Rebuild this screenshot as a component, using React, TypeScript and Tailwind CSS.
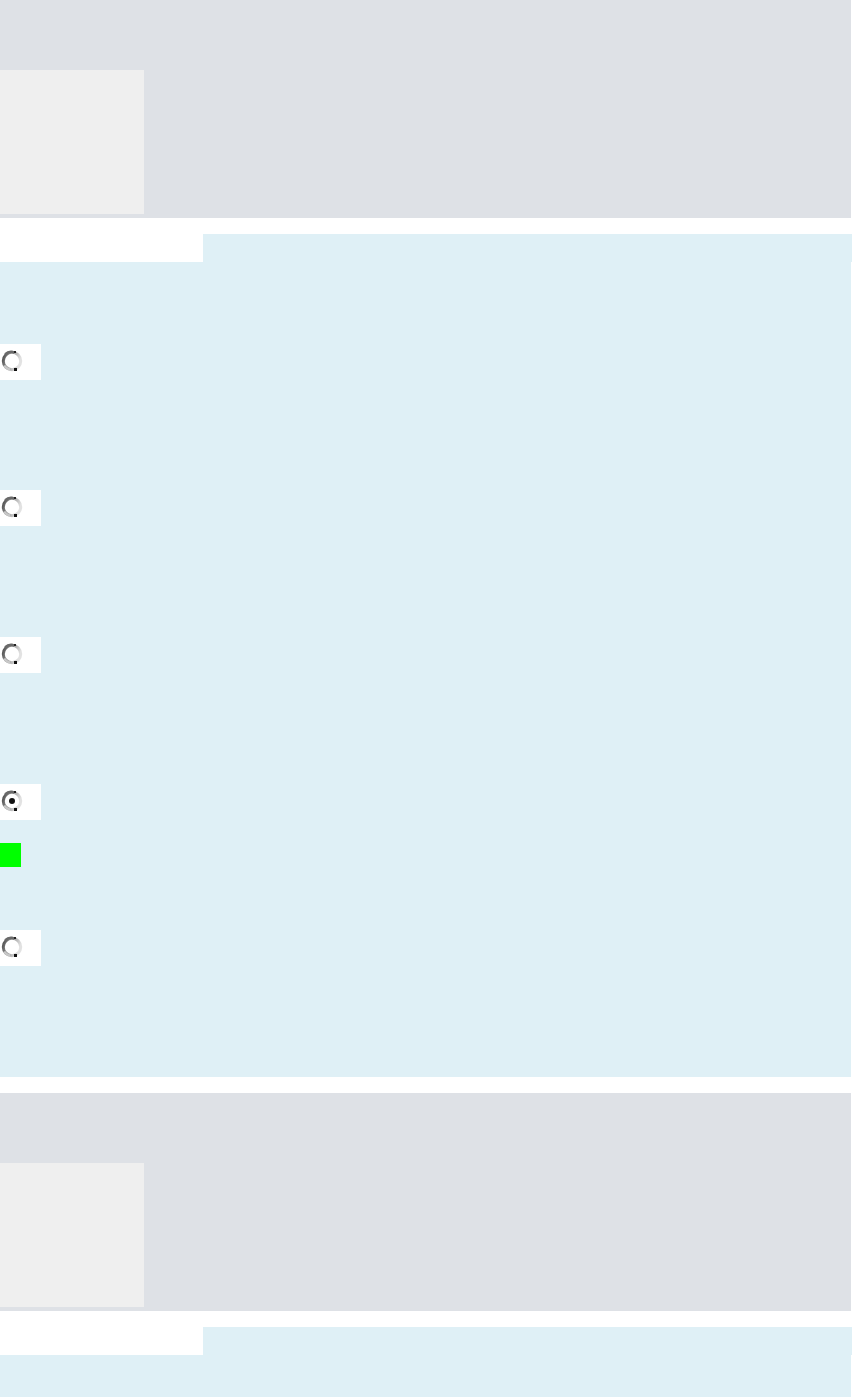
import React from "react";

function Radio({ checked = false }: { checked?: boolean }) {
  const id = checked ? "rgc" : "rg";
  return (
    <div className="w-[41px] h-[36px] bg-white flex items-start">
      <svg width="24" height="26" viewBox="0 0 24 26" className="mt-[4px] ml-[0px]">
        <defs>
          <linearGradient id={id} x1="0" y1="0" x2="1" y2="0.35">
            <stop offset="0" stopColor="#4a4a4a" />
            <stop offset="0.4" stopColor="#8a8a8a" />
            <stop offset="1" stopColor="#e2e2e2" />
          </linearGradient>
        </defs>
        <circle cx="12" cy="13" r="8.7" fill="#ffffff" stroke={`url(#${id})`} strokeWidth="3" />
        <path d="M5.2 6.2 A8.7 8.7 0 0 1 14.5 4.6" stroke="#6a6a6a" strokeWidth="2.6" fill="none" />
        <path d="M4.2 17.5 A8.7 8.7 0 0 0 10 21.6" stroke="#c8c8c8" strokeWidth="2.4" fill="none" />
        <rect x="14" y="20" width="3" height="3" fill="#111" />
        <rect x="14" y="3" width="2" height="2" fill="#222" />
        {checked && <circle cx="12" cy="13" r="3" fill="#111" />}
      </svg>
    </div>
  );
}

function GraySection() {
  return (
    <div className="w-[851px] h-[218px] bg-[#dee1e6] pt-[70px]">
      <div className="w-[144px] h-[144px] bg-[#efefef]" />
    </div>
  );
}

function TabRow() {
  return (
    <div className="flex h-[28px] w-[852px]">
      <div className="w-[203px] bg-white" />
      <div className="flex-1 bg-[#dff0f6]" />
    </div>
  );
}

export default function App() {
  return (
    <div className="w-[852px] min-h-[1397px] bg-white flex flex-col" style={{ fontFamily: "'Liberation Sans', sans-serif" }}>
      <GraySection />
      <div className="h-[16px]" />
      <TabRow />
      <div className="w-[851px] h-[815px] bg-[#dff0f6] flex flex-col pt-[82px]">
        <Radio />
        <div className="h-[110px]" />
        <Radio />
        <div className="h-[111px]" />
        <Radio />
        <div className="h-[111px]" />
        <Radio checked />
        <div className="h-[23px]" />
        <div className="w-[21px] h-[24px] bg-[#00ff00]" />
        <div className="h-[63px]" />
        <Radio />
      </div>
      <div className="h-[16px]" />
      <GraySection />
      <div className="h-[16px]" />
      <TabRow />
      <div className="w-[851px] h-[42px] bg-[#dff0f6]" />
    </div>
  );
}
